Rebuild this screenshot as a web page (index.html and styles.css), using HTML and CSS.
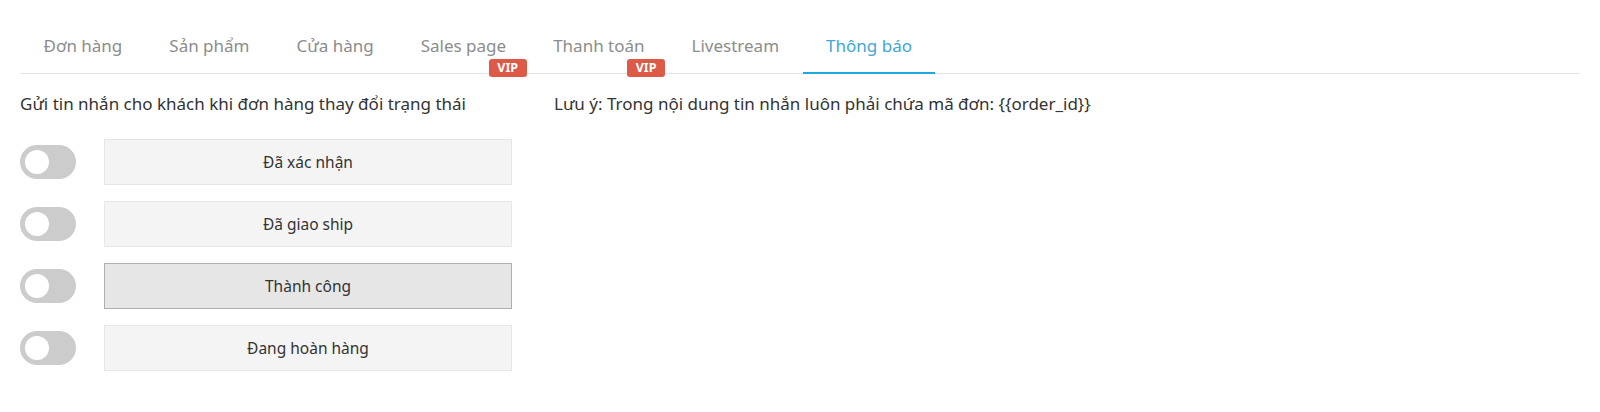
FILE: index.html
```html
<!DOCTYPE html>
<html lang="vi">
<head>
    <meta charset="UTF-8">
    <meta name="viewport" content="width=device-width, initial-scale=1.0">
    <title>Cài đặt - Thông báo</title>
    <link rel="stylesheet" href="styles.css">
</head>
<body>

    <div class="page">
        <ul class="tabs">
            <li class="tab">Đơn hàng</li>
            <li class="tab">Sản phẩm</li>
            <li class="tab">Cửa hàng</li>
            <li class="tab">Sales page <span class="vip">VIP</span></li>
            <li class="tab">Thanh toán <span class="vip">VIP</span></li>
            <li class="tab">Livestream</li>
            <li class="tab active">Thông báo</li>
        </ul>

        <div class="content">
            <div class="col-left">
                <p class="label">Gửi tin nhắn cho khách khi đơn hàng thay đổi trạng thái</p>

                <div class="status-list">
                    <div class="status-row">
                        <span class="switch"></span>
                        <button class="status-btn">Đã xác nhận</button>
                    </div>
                    <div class="status-row">
                        <span class="switch"></span>
                        <button class="status-btn">Đã giao ship</button>
                    </div>
                    <div class="status-row">
                        <span class="switch"></span>
                        <button class="status-btn hover">Thành công</button>
                    </div>
                    <div class="status-row">
                        <span class="switch"></span>
                        <button class="status-btn">Đang hoàn hàng</button>
                    </div>
                </div>
            </div>

            <div class="col-right">
                <p class="label">Lưu ý: Trong nội dung tin nhắn luôn phải chứa mã đơn: {{order_id}}</p>
            </div>
        </div>
    </div>

</body>
</html>
```

FILE: styles.css
```css
body {
    margin: 0;
    font-family: "Noto Sans", "Open Sans", sans-serif;
    font-size: 17px;
    color: #333;
    background-color: #fff;
}

.page {
    padding: 20px 20px 0;
}

/* tabs */
.tabs {
    display: flex;
    list-style: none;
    margin: 0;
    padding: 0;
    height: 53px;
    border-bottom: 1px solid #e6e6e6;
}

.tab {
    position: relative;
    padding: 0 23.5px;
    line-height: 52px;
    font-size: 17px;
    color: #8c8c8c;
    border-bottom: 2px solid transparent;
    margin-bottom: -1px;
    cursor: pointer;
}

.tab.active {
    color: #3fa7d8;
    border-bottom-color: #1fa8dd;
}

.vip {
    position: absolute;
    right: 3px;
    top: 39px;
    width: 38px;
    height: 18px;
    line-height: 18px;
    text-align: center;
    font-size: 12.5px;
    font-weight: bold;
    color: #fff;
    background-color: #de5a48;
    border-radius: 3px;
}

/* content */
.content {
    display: flex;
    margin-top: 18px;
}

.col-left {
    width: 534px;
}

.label {
    margin: 0;
    line-height: 24px;
}

.status-list {
    display: flex;
    flex-direction: column;
    gap: 16px;
    margin-top: 23px;
}

.status-row {
    display: flex;
    align-items: center;
    gap: 28px;
}

.switch {
    position: relative;
    width: 56px;
    height: 34px;
    border-radius: 17px;
    background-color: #cccccc;
}

.switch::before {
    content: "";
    position: absolute;
    left: 5px;
    top: 5px;
    width: 24px;
    height: 24px;
    border-radius: 50%;
    background-color: #fff;
}

.status-btn {
    width: 408px;
    height: 46px;
    font-family: inherit;
    font-size: 15.5px;
    color: #333;
    background-color: #f4f4f4;
    border: 1px solid #e6e6e6;
    cursor: pointer;
}

.status-btn.hover,
.status-btn:hover {
    background-color: #e6e6e6;
    border-color: #b0b0b0;
}
```
